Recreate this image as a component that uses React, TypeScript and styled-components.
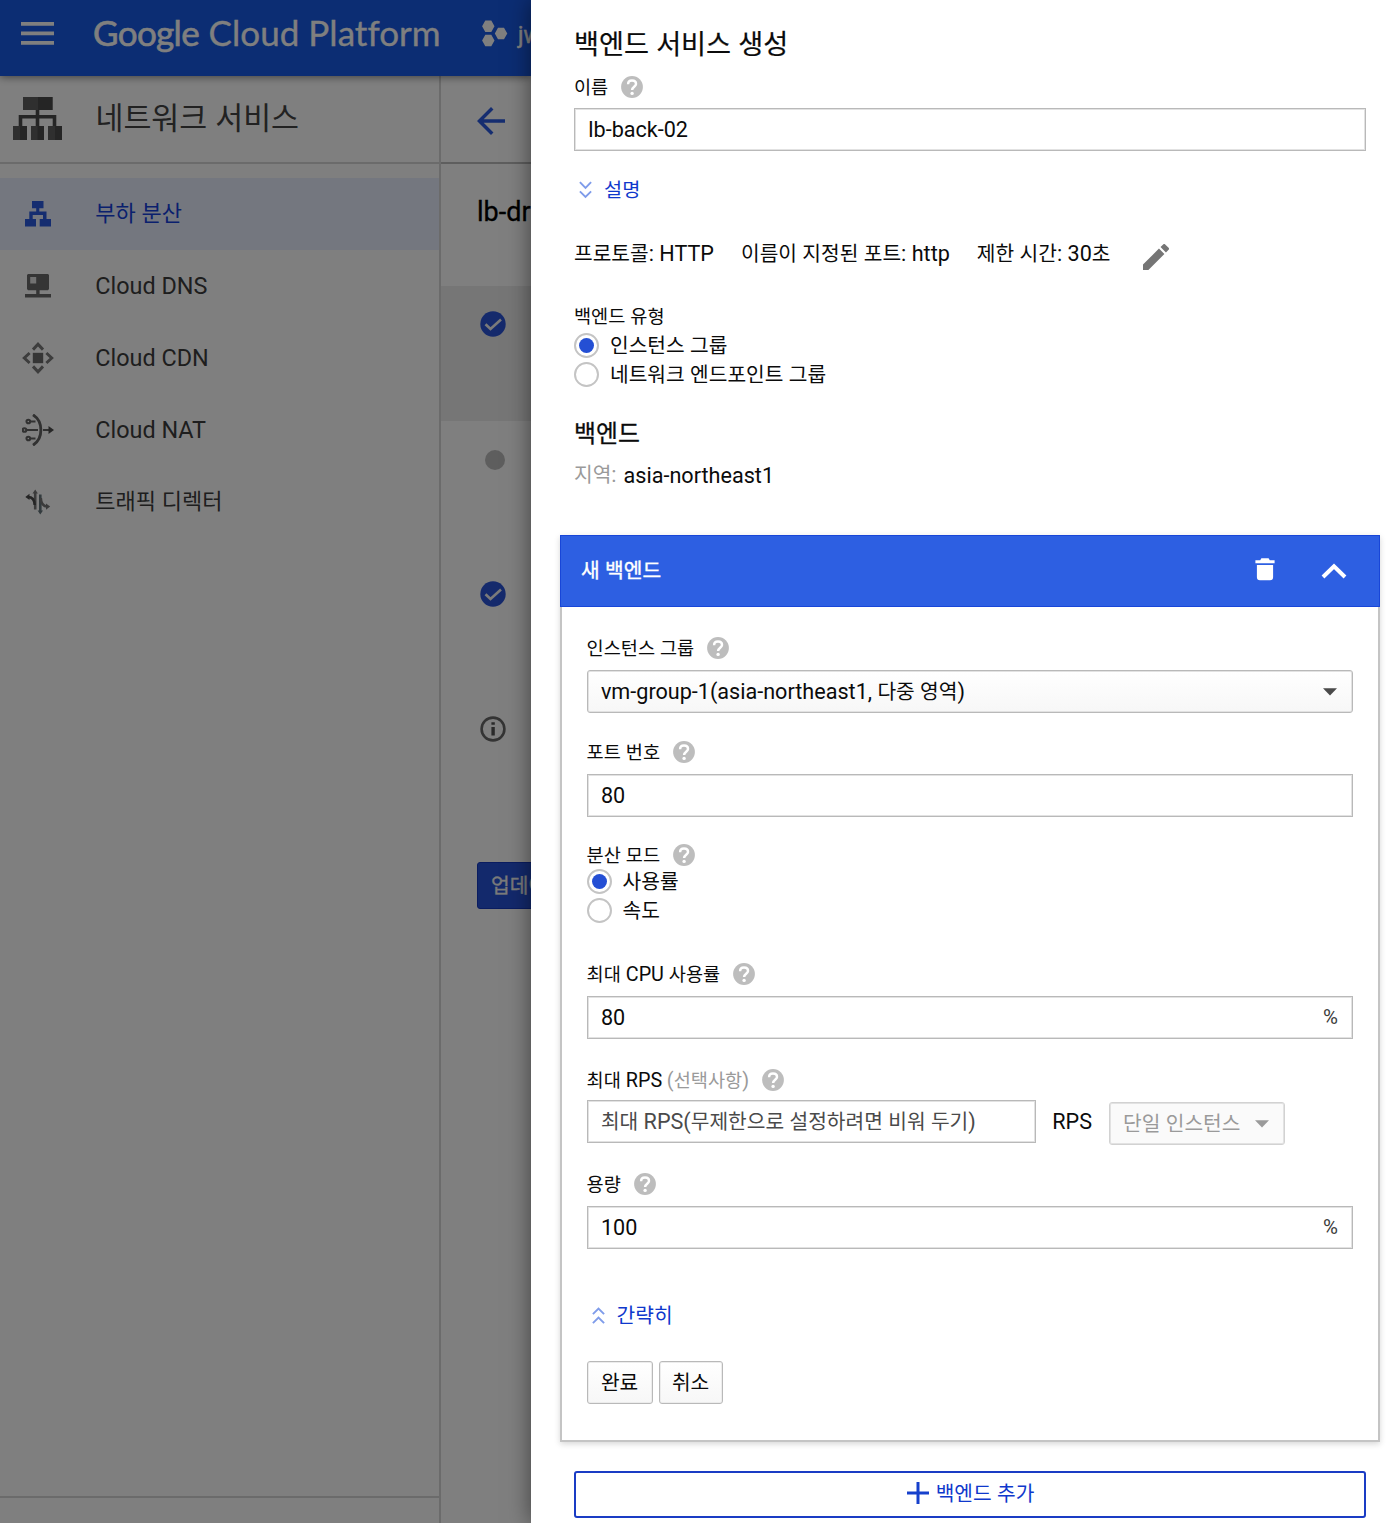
import React from 'react';
import styled, { createGlobalStyle } from 'styled-components';

const GlobalStyle = createGlobalStyle`
  *, *::before, *::after { box-sizing: border-box; }
  body {
    margin: 0;
    background: #fff;
    color: #0b0b0b;
    font-family: Roboto, "Noto Sans CJK KR", sans-serif;
    font-size: 21.6px;
  }
  svg { display: block; flex: none; }
`;

/* ---------- text ---------- */

const Line = styled.span<{ $size?: number; $weight?: number; $color?: string; $drop?: number; $stroke?: number }>`
  display: block;
  white-space: pre;
  line-height: 1.2;
  font-size: ${(p) => p.$size ?? 21.6}px;
  font-weight: ${(p) => p.$weight ?? 400};
  color: ${(p) => p.$color ?? 'inherit'};
  margin-bottom: ${(p) => -2 * (p.$drop ?? 0)}px;
  -webkit-text-stroke: ${(p) => p.$stroke ?? 0}px currentColor;
`;

const Hangul = styled.span`
  font-size: 0.94em;
  line-height: 1;
`;

type TextProps = {
  children: string;
  size?: number;
  weight?: number;
  color?: string;
  drop?: number;
  stroke?: number;
};

/* Hangul runs are set slightly smaller than the Latin beside them. */
function Text({ children, size, weight, color, drop, stroke }: TextProps) {
  return (
    <Line $size={size} $weight={weight} $color={color} $drop={drop} $stroke={stroke}>
      {children.split(/([\uac00-\ud7a3]+)/).filter(Boolean).map((part, i) =>
        /[\uac00-\ud7a3]/.test(part) ? <Hangul key={i}>{part}</Hangul> : part,
      )}
    </Line>
  );
}

/* ---------- icons ---------- */

const HelpIcon = () => (
  <svg width="22" height="22" viewBox="0 0 22 22">
    <circle cx="11" cy="11" r="10.9" fill="#bdbdbd" />
    <path d="M7.1 8.2C7.1 5.9 8.8 4.6 11 4.6s4 1.3 4 3.4c0 2.6-3.9 2.9-3.900 6" fill="none" stroke="#fff" strokeWidth="2.5" />
    <circle cx="11.1" cy="17.4" r="1.7" fill="#fff" />
  </svg>
);

const DoubleChevron = ({ up = false }: { up?: boolean }) => (
  <svg width="13" height="18" viewBox="0 0 13 18" fill="none" stroke="#7f9cea" strokeWidth="1.9">
    <path d={up ? 'M.9 8.2l5.6-5.6 5.6 5.6M.9 17.2l5.6-5.6 5.6 5.6' : 'M.9 1.2l5.6 5.6 5.6-5.6M.9 10.4l5.6 5.6 5.6-5.6'} />
  </svg>
);

const PencilIcon = () => (
  <svg width="26" height="26" viewBox="3 3 18 18" fill="#757575">
    <path d="M3 17.25V21h3.75L17.81 9.94l-3.75-3.75L3 17.25zM20.71 7.04a1 1 0 0 0 0-1.41l-2.34-2.34a1 1 0 0 0-1.41 0l-1.83 1.83 3.75 3.75 1.83-1.83z" />
  </svg>
);

const TrashIcon = () => (
  <svg width="20" height="24" viewBox="0 0 20 24" fill="#fff">
    <path d="M.4 3.2h4.8L6.4 1.2h7.2l1.2 2h4.8v3.1H.4zM1.9 8h16.2v12.2a3 3 0 0 1-3 3H4.9a3 3 0 0 1-3-3z" />
  </svg>
);

const CollapseIcon = () => (
  <svg width="26" height="16" viewBox="0 0 26 16" fill="none" stroke="#fff" strokeWidth="4">
    <path d="M2 14L13 3.2 24 14" />
  </svg>
);

const Caret = ({ color }: { color: string }) => (
  <svg width="14" height="8" viewBox="0 0 14 8" fill={color}>
    <path d="M0 .3h14L7 7.5z" />
  </svg>
);

const PlusIcon = () => (
  <svg width="22" height="22" viewBox="0 0 22 22" fill="none" stroke="#1640cc" strokeWidth="3">
    <path d="M11 0v22M0 11h22" />
  </svg>
);

const MenuIcon = () => (
  <svg width="33" height="23" viewBox="0 0 33 23" fill="#fff">
    <path d="M0 0h33v3.8H0zM0 9.5h33v3.8H0zM0 19h33v3.8H0z" />
  </svg>
);

const ProjectIcon = () => (
  <svg width="26" height="27" viewBox="0 0 26 27" fill="#fff">
    <path d="M3.3.6h6l3.2 5.7-3.2 5.7h-6L.1 6.3zM3.3 14.8h6l3.2 5.7-3.2 5.7h-6L.1 20.5zM16 7.8h6l3.3 5.7-3.3 5.7h-6l-3.200-5.7z" />
  </svg>
);

const NetworkIcon = () => (
  <svg width="49" height="44" viewBox="0 0 49 44">
    <path d="M24.5 12v13M7.5 29v-9.2h34V29M24.5 19v10" fill="none" stroke="#4a4a4a" strokeWidth="3.6" />
    <path d="M10 0h29.5v13H10zM0 29h14v14H0zM18 29h13v14H18zM35 29h14v14H35z" fill="#5e5e5e" />
    <path d="M25 0h14.5v13H25zM7 29h7v14H7zM24.5 29h6.5v14h-6.5zM42 29h7v14h-7z" fill="#4a4a4a" />
  </svg>
);

const BalanceIcon = () => (
  <svg width="26" height="26" viewBox="0 0 26 26" fill="#2a5be0">
    <path d="M7 0h11.5v7.2H14.3v3.3H21.5v7.6H26V25.4H14.7v-7.3H18v-4.2H7.7v4.2H11v7.3H0v-7.3H4.3v-7.6H11.2V7.2H7z" />
  </svg>
);

const DnsIcon = () => (
  <svg width="26" height="25" viewBox="0 0 26 25" fill="#6b6b6b">
    <path d="M3 0h20l1 1v14l-1 1.2h-8.4V20H26v3.4H0V20h11.2v-3.8H3l-1-1.2V1z" />
    <path d="M5.2 3h6v6.5h-6z" fill="#e4e4e4" />
  </svg>
);

const CdnIcon = () => (
  <svg width="32" height="32" viewBox="0 0 32 32" fill="none" stroke="#7a7a7a" strokeWidth="3">
    <path d="M10.8 10.8h10.4v10.4H10.8z" fill="#6b6b6b" stroke="none" />
    <path d="M11 7.6l5-5.3 5 5.3M11 24.4l5 5.3 5-5.3M7.6 11l-5.3 5 5.3 5M24.4 11l5.3 5-5.3 5" />
  </svg>
);

const NatIcon = () => (
  <svg width="32" height="32" viewBox="0 0 32 32" fill="none" stroke="#626262" strokeWidth="2.1">
    <path d="M11 .8C21.5 7.5 21.5 24.5 11 31.2" strokeWidth="2.8" />
    <circle cx="6.3" cy="7.5" r="1.8" />
    <circle cx="2.5" cy="16" r="1.8" />
    <circle cx="6.3" cy="24.5" r="1.8" />
    <path d="M8 7.5h5.5M4 16h12M8 24.5h5.5M21 16h7" />
    <path d="M26.5 12l5.5 4-5.5 4z" fill="#4e4e4e" stroke="none" />
  </svg>
);

const TrafficIcon = () => (
  <svg width="26" height="26" viewBox="0 0 26 26" fill="none" strokeWidth="2.6">
    <path d="M10.2 20.5V3" stroke="#777" />
    <path d="M7.5 4.5L10.2.5l2.700 4z" fill="#777" />
    <path d="M9.7 16C9.5 10 7 8 3 8" stroke="#4b4b4b" />
    <path d="M4.5 4.8L.3 8l4.2 3z" fill="#4b4b4b" />
    <path d="M15.3 5.5V23" stroke="#66767c" />
    <path d="M12.6 21.5l2.7 4 2.7-4z" fill="#66767c" />
    <path d="M15.8 9c.2 6 2.7 8.5 6.7 8.5" stroke="#777" />
    <path d="M21 14.5l4.2 3-4.2 3.2z" fill="#777" />
  </svg>
);

const BackIcon = () => (
  <svg width="28" height="28" viewBox="4 4 16 16" fill="#2a5be0">
    <path d="M20 11H7.83l5.59-5.59L12 4l-8 8 8 8 1.41-1.41L7.83 13H20v-2z" />
  </svg>
);

const CheckBadge = () => (
  <svg width="26" height="26" viewBox="0 0 26 26">
    <circle cx="13" cy="13" r="12.7" fill="#2b55d8" />
    <path d="M5.5 13.2l5 4.8L21 8.5" fill="none" stroke="#f4f4f4" strokeWidth="2.6" />
  </svg>
);

const InfoBadge = () => (
  <svg width="26" height="26" viewBox="0 0 26 26">
    <circle cx="13" cy="13" r="11.4" fill="none" stroke="#686868" strokeWidth="2.6" />
    <path d="M11.4 6.2h3.4v2.6h-3.4zM11.4 11h3.4v8.6h-3.4z" fill="#555" />
  </svg>
);

const IdleBadge = () => (
  <svg width="26" height="28" viewBox="0 0 26 28">
    <circle cx="15" cy="14" r="10" fill="#bdbdbd" />
  </svg>
);

/* ---------- page behind the drawer ---------- */

const Page = styled.div`
  display: flex;
  width: 1400px;
  height: 1523px;
  overflow: hidden;
`;

const Underlay = styled.div`
  position: relative;
  flex: none;
  width: 531px;
  height: 100%;
  display: flex;
  flex-direction: column;
  overflow: hidden;
`;

const Scrim = styled.div`
  position: absolute;
  inset: 0;
  z-index: 3;
  background: rgba(0, 0, 0, 0.5);
`;

const TopBar = styled.header`
  position: relative;
  z-index: 1;
  flex: none;
  display: flex;
  align-items: center;
  height: 76px;
  padding: 0 0 10px 21px;
  background: #185be6;
  box-shadow: 0 1px 8px rgba(0, 0, 0, 0.5);
  color: #fff;
`;

const Brand = styled.div`
  flex: none;
  display: flex;
  gap: 9.5px;
  width: 389px;
  margin-left: 39px;
  padding-bottom: 2px;
  white-space: nowrap;
  font-family: Lato, Roboto, sans-serif;
  font-size: 35px;
  line-height: 44px;
  letter-spacing: 0.05px;
  font-variant-ligatures: none;
  -webkit-text-stroke: 0.3px currentColor;
`;

const BrandStrong = styled.span`
  letter-spacing: -0.65px;
  -webkit-text-stroke: 0.6px currentColor;
`;

const ProjectName = styled.div`
  margin-left: 10px;
  padding-top: 5px;
  white-space: nowrap;
  font-size: 23px;
  -webkit-text-stroke: 0.4px currentColor;
`;

const Columns = styled.div`
  flex: 1;
  display: flex;
  min-height: 0;
`;

const Sidebar = styled.nav`
  flex: none;
  display: flex;
  flex-direction: column;
  width: 441px;
  border-right: 2px solid #d6d6d6;
  color: #444;
`;

const SidebarTitle = styled.div`
  display: flex;
  align-items: center;
  gap: 34px;
  height: 88px;
  padding-left: 12.5px;
  border-bottom: 2px solid #d6d6d6;
`;

const NavList = styled.div`
  flex: 1;
  padding-top: 14px;
`;

const NavItem = styled.div<{ $active?: boolean }>`
  display: flex;
  align-items: center;
  height: 72px;
  background: ${(p) => (p.$active ? '#e8eefe' : 'transparent')};
  color: ${(p) => (p.$active ? '#1440dc' : '#3c3c3c')};
`;

const NavIcon = styled.div`
  display: flex;
  justify-content: center;
  width: 76px;
  margin-right: 19.3px;
`;

const SidebarFooter = styled.div`
  height: 27px;
  border-top: 2px solid #d6d6d6;
`;

const Main = styled.main`
  flex: none;
  width: 400px;
`;

const MainHeader = styled.div`
  display: flex;
  align-items: center;
  height: 88px;
  padding: 3px 0 0 36px;
  border-bottom: 2px solid #bdbdbd;
`;

const MainTitle = styled.div`
  display: flex;
  align-items: center;
  height: 122px;
  padding: 0 0 26px 36px;
`;

const Step = styled.div<{ $current?: boolean }>`
  height: 135px;
  padding: 25px 0 0 39px;
  background: ${(p) => (p.$current ? '#ededed' : 'transparent')};
`;

const UpdateButton = styled.div`
  display: flex;
  align-items: center;
  height: 47px;
  margin: 36px 0 0 36px;
  padding-left: 13px;
  border-radius: 3px;
  background: #2653d8;
  border: 1px solid #1438c0;
  color: #f4f4f4;
`;

/* ---------- drawer ---------- */

const Drawer = styled.aside`
  position: relative;
  z-index: 4;
  flex: 1;
  padding: 23px 20px 0 29px;
  background: #fff;
  box-shadow: 0 0 22px rgba(0, 0, 0, 0.5);
`;

const Inset = styled.div`
  padding: 0 14px;
`;

const Row = styled.div<{ $h: number; $top?: number; $gap?: number; $indent?: number }>`
  display: flex;
  align-items: center;
  height: ${(p) => p.$h}px;
  margin-top: ${(p) => p.$top ?? 0}px;
  padding-left: ${(p) => p.$indent ?? 0}px;
  gap: ${(p) => p.$gap ?? 0}px;
`;

const PencilSlot = styled.span`
  padding-top: 8px;
  margin-left: 5.5px;
`;

const FieldBox = styled.div<{ $w?: number; $top?: number }>`
  flex: none;
  display: flex;
  align-items: center;
  justify-content: space-between;
  width: ${(p) => (p.$w ? `${p.$w}px` : 'auto')};
  height: 43px;
  margin-top: ${(p) => p.$top ?? 0}px;
  padding: 0 14px 0 13.3px;
  border: 1px solid #b9b9b9;
  box-shadow: inset 0 0 0 1px #e2e2e2;
  background: #fff;
`;

const SelectBox = styled(FieldBox)<{ $disabled?: boolean }>`
  padding-right: 15px;
  border-radius: 3px;
  border-color: ${(p) => (p.$disabled ? '#d2d2d2' : '#b9b9b9')};
  background: ${(p) => (p.$disabled ? '#fafafa' : 'linear-gradient(#fff, #f7f7f7)')};
`;

const Radio = styled.span<{ $on?: boolean }>`
  display: flex;
  align-items: center;
  justify-content: center;
  width: 25px;
  height: 25px;
  border: 2px solid #c4c4c4;
  border-radius: 50%;
  &::after {
    content: '';
    width: 15px;
    height: 15px;
    border-radius: 50%;
    background: ${(p) => (p.$on ? '#244fd4' : 'transparent')};
  }
`;

const Card = styled.section`
  margin-top: 47px;
  box-shadow: 0 2px 6px rgba(0, 0, 0, 0.16);
`;

const CardHeader = styled.div`
  display: flex;
  align-items: center;
  height: 72px;
  padding: 0 32px 0 20px;
  border: 1px solid #1846d8;
  background: #2d5fe2;
  color: #fff;
`;

const HeaderActions = styled.div`
  display: flex;
  align-items: center;
  gap: 46px;
  margin-left: auto;
`;

const TrashSlot = styled.span`
  padding-bottom: 4px;
`;

const CardBody = styled.div`
  height: 835px;
  padding: 30px 25px 0 24.6px;
  border: 2px solid #c4c4c4;
  border-top: 0;
  background: #fff;
`;

const Button = styled.div<{ $w: number }>`
  display: flex;
  align-items: center;
  justify-content: center;
  width: ${(p) => p.$w}px;
  height: 43px;
  border: 1px solid #b9b9b9;
  border-radius: 3px;
  box-shadow: inset 0 0 0 1px #ececec;
  background: linear-gradient(#fff, #f7f7f7);
`;

const AddButton = styled.div`
  display: flex;
  align-items: center;
  justify-content: center;
  gap: 7px;
  height: 47px;
  margin-top: 29px;
  padding: 0 0 4px 1px;
  border: 2px solid #1a3cc4;
  border-radius: 3px;
`;

function FieldLabel({ text, note, top, help = true }: { text: string; note?: string; top?: number; help?: boolean }) {
  return (
    <Row $h={22} $top={top} $gap={12.7}>
      <Row as="span" $h={22} $gap={4.7}>
        <Text size={19.8} drop={1}>{text}</Text>
        {note && <Text size={19.8} drop={1} color="#9a9a9a">{note}</Text>}
      </Row>
      {help && <HelpIcon />}
    </Row>
  );
}

function RadioRow({ text, on, top }: { text: string; on?: boolean; top?: number }) {
  return (
    <Row $h={29} $top={top} $gap={11}>
      <Radio $on={on} />
      <Text>{text}</Text>
    </Row>
  );
}

const LINK = '#0f38cc';

const navItems = [
  { text: '부하 분산', icon: <BalanceIcon />, active: true },
  { text: 'Cloud DNS', icon: <DnsIcon /> },
  { text: 'Cloud CDN', icon: <CdnIcon /> },
  { text: 'Cloud NAT', icon: <NatIcon /> },
  { text: '트래픽 디렉터', icon: <TrafficIcon /> },
];

export default function App() {
  return (
    <>
      <GlobalStyle />
      <Page>
        <Underlay>
          <TopBar>
            <MenuIcon />
            <Brand>
              <BrandStrong>Google</BrandStrong>
              <span>Cloud Platform</span>
            </Brand>
            <ProjectIcon />
            <ProjectName>jw</ProjectName>
          </TopBar>
          <Columns>
            <Sidebar>
              <SidebarTitle>
                <NetworkIcon />
                <Text size={32.3} drop={-1}>네트워크 서비스</Text>
              </SidebarTitle>
              <NavList>
                {navItems.map((item) => (
                  <NavItem key={item.text} $active={item.active}>
                    <NavIcon>{item.icon}</NavIcon>
                    <Text size={23.4} drop={/[A-Z]/.test(item.text) ? 0 : -1}>{item.text}</Text>
                  </NavItem>
                ))}
              </NavList>
              <SidebarFooter />
            </Sidebar>
            <Main>
              <MainHeader><BackIcon /></MainHeader>
              <MainTitle><Text size={27} color="#000" stroke={0.3}>lb-dr</Text></MainTitle>
              <Step $current><CheckBadge /></Step>
              <Step><IdleBadge /></Step>
              <Step><CheckBadge /></Step>
              <Step><InfoBadge /></Step>
              <UpdateButton><Text stroke={0.3}>업데이트</Text></UpdateButton>
            </Main>
          </Columns>
          <Scrim />
        </Underlay>

        <Drawer>
          <Inset>
            <Row $h={40}><Text size={28.9} drop={1} stroke={0.2}>백엔드 서비스 생성</Text></Row>
            <FieldLabel text="이름" top={13} />
            <FieldBox $top={10}><Text>lb-back-02</Text></FieldBox>
            <Row $h={24} $top={27} $gap={12} $indent={5}>
              <DoubleChevron />
              <Text size={21} color={LINK} drop={1}>설명</Text>
            </Row>
            <Row $h={30} $top={36} $gap={27}>
              <Text drop={1}>프로토콜: HTTP</Text>
              <Text drop={1}>이름이 지정된 포트: http</Text>
              <Text drop={1}>제한 시간: 30초</Text>
              <PencilSlot><PencilIcon /></PencilSlot>
            </Row>
            <FieldLabel text="백엔드 유형" top={37} help={false} />
            <RadioRow text="인스턴스 그룹" on top={4} />
            <RadioRow text="네트워크 엔드포인트 그룹" />
            <Row $h={30} $top={29}><Text size={25.4} stroke={0.3}>백엔드</Text></Row>
            <Row $h={26} $top={14} $gap={7}>
              <Text color="#9a9a9a">지역:</Text>
              <Text drop={0.5}>asia-northeast1</Text>
            </Row>
          </Inset>

          <Card>
            <CardHeader>
              <Text stroke={0.4}>새 백엔드</Text>
              <HeaderActions>
                <TrashSlot><TrashIcon /></TrashSlot>
                <CollapseIcon />
              </HeaderActions>
            </CardHeader>
            <CardBody>
              <FieldLabel text="인스턴스 그룹" />
              <SelectBox $top={11}>
                <Text>vm-group-1(asia-northeast1, 다중 영역)</Text>
                <Caret color="#4a4a4a" />
              </SelectBox>

              <FieldLabel text="포트 번호" top={28} />
              <FieldBox $top={11}><Text>80</Text></FieldBox>

              <FieldLabel text="분산 모드" top={27} />
              <RadioRow text="사용률" on top={1} />
              <RadioRow text="속도" />

              <FieldLabel text="최대 CPU 사용률" top={38} />
              <FieldBox $top={11}>
                <Text>80</Text>
                <Text size={20.4} color="#3c3c3c">%</Text>
              </FieldBox>

              <FieldLabel text="최대 RPS" note="(선택사항)" top={30} />
              <Row $h={43} $top={9} $gap={16.7}>
                <FieldBox $w={449}>
                  <Text color="#4a4a4a">최대 RPS(무제한으로 설정하려면 비워 두기)</Text>
                </FieldBox>
                <Text>RPS</Text>
                <SelectBox $w={176} $disabled $top={4}>
                  <Text color="#9a9a9a">단일 인스턴스</Text>
                  <Caret color="#9a9a9a" />
                </SelectBox>
              </Row>

              <FieldLabel text="용량" top={30} />
              <FieldBox $top={11}>
                <Text>100</Text>
                <Text size={20.4} color="#3c3c3c">%</Text>
              </FieldBox>

              <Row $h={24} $top={54} $gap={12} $indent={5}>
                <DoubleChevron up />
                <Text color={LINK} drop={1}>간략히</Text>
              </Row>

              <Row $h={43} $top={34} $gap={6}>
                <Button $w={66}><Text>완료</Text></Button>
                <Button $w={64}><Text>취소</Text></Button>
              </Row>
            </CardBody>
          </Card>

          <Inset>
            <AddButton>
              <PlusIcon />
              <Text color={LINK} drop={1}>백엔드 추가</Text>
            </AddButton>
          </Inset>
        </Drawer>
      </Page>
    </>
  );
}
